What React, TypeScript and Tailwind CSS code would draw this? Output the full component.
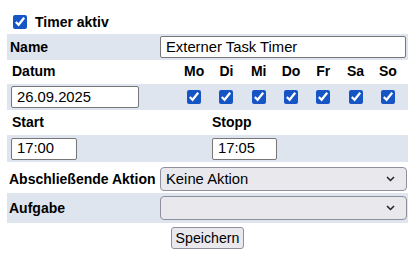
import React from 'react';

const days = ['Mo', 'Di', 'Mi', 'Do', 'Fr', 'Sa', 'So'];

const Chevron = () => (
  <svg width="9" height="6" viewBox="0 0 9 6" className="pointer-events-none absolute right-[12px] top-1/2 -translate-y-1/2">
    <path d="M1 1l3.5 3.5L8 1" fill="none" stroke="#222" strokeWidth="1.5" />
  </svg>
);

const Select = ({ value }: { value: string }) => (
  <div className="relative w-[247px]">
    <select
      defaultValue={value}
      className="h-[24px] w-full appearance-none rounded-[4px] border border-[#8f8f9d] bg-[#e9e9ed] pl-[5px] text-[14.8px] text-black outline-none"
    >
      <option>{value}</option>
    </select>
    <Chevron />
  </div>
);

const inputCls =
  'h-[22px] rounded-[2px] border border-[#767676] bg-white px-[5px] text-[14.8px] text-black outline-none';

const App: React.FC = () => {
  return (
    <div className="h-[260px] w-[420px] bg-white pt-[10px] font-['Liberation_Sans',Arial,sans-serif] text-[14px] text-black">
      <div className="ml-[7px] w-[401px]">
        {/* Timer aktiv */}
        <div className="flex h-[24px] items-center pl-[6px]">
          <input type="checkbox" defaultChecked className="m-0 h-[14px] w-[14px] accent-[#1656c4]" />
          <span className="ml-[8px] font-bold">Timer aktiv</span>
        </div>

        {/* Name */}
        <div className="flex h-[26px] items-center justify-between bg-[#dfe5ef] pl-[3px] pr-[2px]">
          <span className="font-bold">Name</span>
          <input className={`${inputCls} w-[246px]`} defaultValue="Externer Task Timer" />
        </div>

        {/* Datum + Wochentage */}
        <div className="flex h-[24px] items-end pb-[2px] pl-[5px]">
          <span className="w-[166px] font-bold">Datum</span>
          <div className="grid w-[226px] grid-cols-7">
            {days.map((d) => (
              <span key={d} className="text-center font-bold">
                {d}
              </span>
            ))}
          </div>
        </div>
        <div className="flex h-[26px] items-center bg-[#dfe5ef] pl-[4px]">
          <div className="w-[167px]">
            <input className={`${inputCls} w-[128px]`} defaultValue="26.09.2025" />
          </div>
          <div className="grid w-[226px] grid-cols-7">
            {days.map((d) => (
              <div key={d} className="flex justify-center">
                <input type="checkbox" defaultChecked className="m-0 h-[14px] w-[14px] accent-[#1656c4]" />
              </div>
            ))}
          </div>
        </div>

        {/* Start / Stopp */}
        <div className="flex h-[25px] items-end pb-[2px] pl-[5px]">
          <span className="w-[200px] font-bold">Start</span>
          <span className="font-bold">Stopp</span>
        </div>
        <div className="flex h-[27px] items-center bg-[#dfe5ef] pl-[4px]">
          <div className="w-[201px]">
            <input className={`${inputCls} w-[66px]`} defaultValue="17:00" />
          </div>
          <input className={`${inputCls} w-[65px]`} defaultValue="17:05" />
        </div>

        {/* Abschließende Aktion */}
        <div className="mt-[3px] flex h-[28px] items-center justify-between pl-[2px] pr-[1px]">
          <span className="font-bold">Abschließende Aktion</span>
          <Select value="Keine Aktion" />
        </div>

        {/* Aufgabe */}
        <div className="flex h-[30px] items-center justify-between bg-[#dfe5ef] pl-[2px] pr-[1px]">
          <span className="font-bold">Aufgabe</span>
          <Select value="" />
        </div>

        <div className="mt-[4px] flex justify-center">
          <button className="h-[22px] rounded-[3px] border border-[#8f8f9d] bg-[#e9e9ed] px-[4px] text-[14.2px] leading-none">
            Speichern
          </button>
        </div>
      </div>
    </div>
  );
};

export default App;
